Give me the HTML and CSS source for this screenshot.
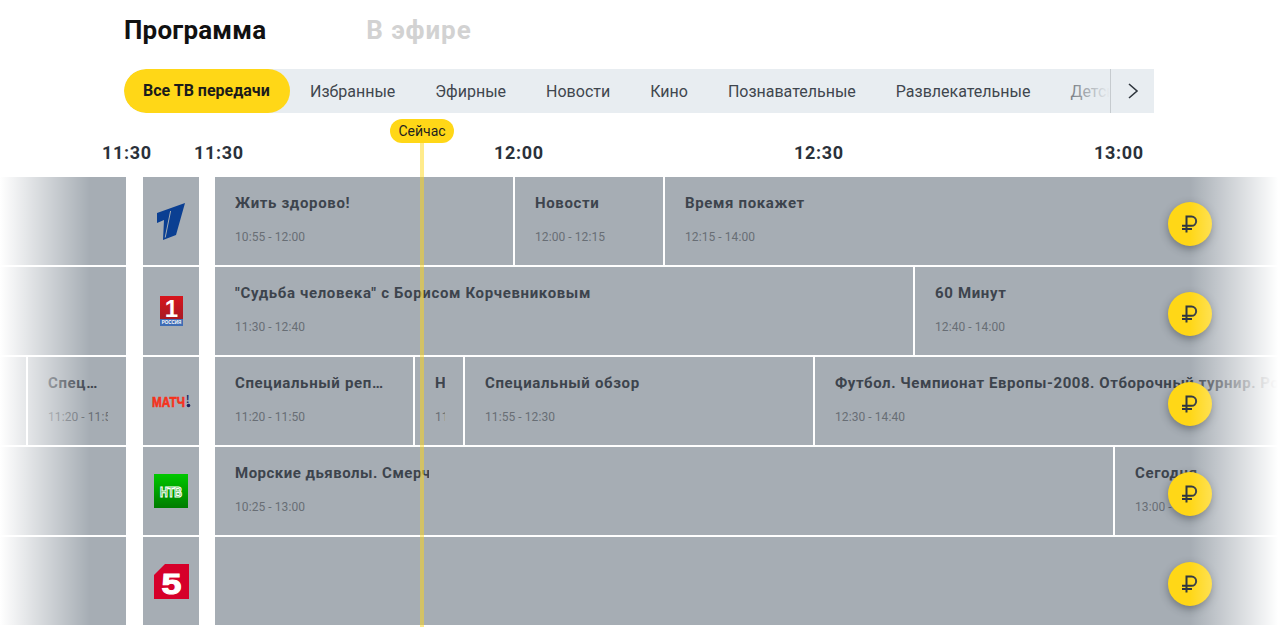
FILE: index.html
```html
<!DOCTYPE html>
<html lang="ru">
<head>
<meta charset="utf-8">
<title>Программа</title>
<link rel="stylesheet" href="styles.css">
</head>
<body>
<div class="page">
  <header class="tabs">
    <h1 class="tab tab-active">Программа</h1>
    <h1 class="tab">В эфире</h1>
  </header>

  <nav class="filters">
    <div class="filter-list">
      <a class="filter filter-active">Все ТВ передачи</a>
      <a class="filter">Избранные</a>
      <a class="filter">Эфирные</a>
      <a class="filter">Новости</a>
      <a class="filter">Кино</a>
      <a class="filter">Познавательные</a>
      <a class="filter">Развлекательные</a>
      <a class="filter">Детские</a>
    </div>
    <div class="filter-fade"></div>
    <button class="filter-next" aria-label="Вперёд">
      <svg width="12" height="18" viewBox="0 0 12 18"><path d="M2 2l8 7-8 7" fill="none" stroke="#2f363e" stroke-width="1.6"/></svg>
    </button>
  </nav>

  <div class="times">
    <span class="time time-prev">11:30</span>
    <span class="time">11:30</span>
    <span class="time">12:00</span>
    <span class="time">12:30</span>
    <span class="time">13:00</span>
  </div>

  <main class="guide">
    <section class="row">
      <div class="prev"></div>
      <div class="logo">
        <svg width="28" height="38" viewBox="0 0 28 38"><polygon points="0,11 28,1 19,33 6,38 7,18 0,21" fill="#0b3f92"/><path d="M13.600 9L8.200 35.500" stroke="#a6adb4" stroke-width="1"/></svg>
      </div>
      <div class="track">
        <article class="show w300"><h2 class="show-title">Жить здорово!</h2><p class="show-time">10:55 - 12:00</p></article>
        <article class="show w150"><h2 class="show-title">Новости</h2><p class="show-time">12:00 - 12:15</p></article>
        <article class="show w1400"><h2 class="show-title">Время покажет</h2><p class="show-time">12:15 - 14:00</p></article>
      </div>
      <button class="pay" aria-label="Купить"><svg width="16" height="18" viewBox="0 0 16 18"><path d="M4.500 17.500V1.500h5a4.500 4.500 0 0 1 0 9.300H0M0 14h10" fill="none" stroke="#30373f" stroke-width="2"/></svg></button>
    </section>

    <section class="row">
      <div class="prev"></div>
      <div class="logo">
        <svg width="23" height="30" viewBox="0 0 23 30"><defs><linearGradient id="rr" x1="0" y1="0" x2="0" y2="1"><stop offset="0" stop-color="#d8141c"/><stop offset="1" stop-color="#a81a24"/></linearGradient></defs><rect width="23" height="23" fill="url(#rr)"/><rect y="23" width="23" height="7" fill="#3f6db5"/><text x="11.500" y="20.500" class="logo-one">1</text><text x="11.500" y="28.300" class="logo-rus">РОССИЯ</text></svg>
      </div>
      <div class="track">
        <article class="show w700"><h2 class="show-title">"Судьба человека" с Борисом Корчевниковым</h2><p class="show-time">11:30 - 12:40</p></article>
        <article class="show w1400"><h2 class="show-title">60 Минут</h2><p class="show-time">12:40 - 14:00</p></article>
      </div>
      <button class="pay" aria-label="Купить"><svg width="16" height="18" viewBox="0 0 16 18"><path d="M4.500 17.500V1.500h5a4.500 4.500 0 0 1 0 9.300H0M0 14h10" fill="none" stroke="#30373f" stroke-width="2"/></svg></button>
    </section>

    <section class="row">
      <div class="prev">
        <article class="show w28 prev-gap"></article>
        <article class="show w100"><h2 class="show-title tight">Специальный репортаж</h2><p class="show-time">11:20 - 11:50</p></article>
      </div>
      <div class="logo">
        <svg width="39" height="13" viewBox="0 0 39 13"><text x="0" y="12" class="logo-match" textLength="33" lengthAdjust="spacingAndGlyphs">МАТЧ</text><text x="34" y="8" class="logo-bang">!</text><circle cx="36.500" cy="10.500" r="1.800" fill="#20245c"/></svg>
      </div>
      <div class="track">
        <article class="show w200"><h2 class="show-title tight">Специальный репортаж</h2><p class="show-time">11:20 - 11:50</p></article>
        <article class="show w50"><h2 class="show-title clip">Новости</h2><p class="show-time">11:50 - 11:55</p></article>
        <article class="show w350"><h2 class="show-title">Специальный обзор</h2><p class="show-time">11:55 - 12:30</p></article>
        <article class="show w1400"><h2 class="show-title long">Футбол. Чемпионат Европы-2008. Отборочный турнир. Россия - Англия</h2><p class="show-time">12:30 - 14:40</p></article>
      </div>
      <button class="pay" aria-label="Купить"><svg width="16" height="18" viewBox="0 0 16 18"><path d="M4.500 17.500V1.500h5a4.500 4.500 0 0 1 0 9.300H0M0 14h10" fill="none" stroke="#30373f" stroke-width="2"/></svg></button>
    </section>

    <section class="row">
      <div class="prev"></div>
      <div class="logo">
        <svg width="34" height="34" viewBox="0 0 34 34"><defs><linearGradient id="ntv" x1="0" y1="0" x2="0" y2="1"><stop offset="0" stop-color="#00c800"/><stop offset="1" stop-color="#007c00"/></linearGradient></defs><rect width="34" height="34" fill="url(#ntv)"/><text x="6" y="23" class="logo-ntv" textLength="22" lengthAdjust="spacingAndGlyphs">НТВ</text></svg>
      </div>
      <div class="track">
        <article class="show w900"><h2 class="show-title cut">Морские дьяволы. Смерч</h2><p class="show-time">10:25 - 13:00</p></article>
        <article class="show w1400"><h2 class="show-title">Сегодня</h2><p class="show-time">13:00 - 14:00</p></article>
      </div>
      <button class="pay" aria-label="Купить"><svg width="16" height="18" viewBox="0 0 16 18"><path d="M4.500 17.500V1.500h5a4.500 4.500 0 0 1 0 9.300H0M0 14h10" fill="none" stroke="#30373f" stroke-width="2"/></svg></button>
    </section>

    <section class="row">
      <div class="prev"></div>
      <div class="logo">
        <svg width="35" height="35" viewBox="0 0 35 35"><polygon points="11,0 35,0 35,35 0,35 0,11" fill="#d6002a"/><text x="7.500" y="29.500" class="logo-five" textLength="20" lengthAdjust="spacingAndGlyphs">5</text></svg>
      </div>
      <div class="track">
        <article class="show w1400"></article>
      </div>
      <button class="pay" aria-label="Купить"><svg width="16" height="18" viewBox="0 0 16 18"><path d="M4.500 17.500V1.500h5a4.500 4.500 0 0 1 0 9.300H0M0 14h10" fill="none" stroke="#30373f" stroke-width="2"/></svg></button>
    </section>

    <div class="fade fade-left"></div>
    <div class="fade fade-right"></div>
  </main>

  <div class="now">
    <span class="now-label">Сейчас</span>
    <span class="now-line"></span>
  </div>
</div>
</body>
</html>
```

FILE: styles.css
```css
* { box-sizing: border-box; }
html, body { margin: 0; padding: 0; background: #fff; }
body { font-family: Roboto, "Liberation Sans", sans-serif; color: #2f363e; }

.page { position: relative; width: 1278px; height: 627px; overflow: hidden; }

.tabs { display: flex; gap: 100px; height: 69px; padding: 14px 0 0 124px; }
.tab { margin: 0; font: 700 26px/33px Roboto, sans-serif; letter-spacing: .9px; color: #d2d2d2; }
.tab-active { letter-spacing: .2px; color: #111; }

.filters { position: relative; display: flex; width: 1030px; height: 44px; margin-left: 124px; border-radius: 22px 0 0 22px; background: #e8edf1; overflow: hidden; }
.filter-list { display: flex; flex: none; width: 986px; overflow: hidden; }
.filter { flex: none; padding: 0 20px; font-size: 16px; line-height: 45px; color: #3f464e; white-space: nowrap; }
.filter-active { padding: 0 19px; width: 166px; border-radius: 22px; background: #ffd717; font-weight: 700; line-height: 44px; color: #1b1b1b; }
.filter-fade { position: absolute; top: 0; right: 44px; width: 60px; height: 44px; background: linear-gradient(to right, rgba(232,237,241,0), #e8edf1); }
.filter-next { position: relative; display: flex; flex: 1; align-items: center; justify-content: center; padding: 0; border: 0; border-left: 1px solid #c6cbcf; background: #e8edf1; }

.times { display: flex; height: 64px; padding: 28px 0 0 102px; }
.time { flex: none; width: 300px; font-size: 18px; font-weight: 700; line-height: 24px; letter-spacing: .7px; color: #2a313a; }
.time-prev { width: 92px; }

.guide { position: relative; display: flex; flex-direction: column; gap: 2px; }
.row { position: relative; display: flex; flex: none; height: 88px; }
.prev { display: flex; flex: none; width: 126px; margin-right: 17px; background: #a6adb4; overflow: hidden; }
.logo { display: flex; flex: none; align-items: center; justify-content: center; width: 56px; margin-right: 16px; background: #a6adb4; }
.track { display: flex; flex: 1; min-width: 0; overflow: hidden; }

.show { flex: none; height: 88px; padding: 0 18px 0 20px; border-right: 2px solid #fff; background: #a6adb4; overflow: hidden; }
.prev-gap { padding: 0; }
.show-title { margin: 16px 0 0; font: 700 15px/20px Roboto, sans-serif; letter-spacing: .65px; color: #3d444d; white-space: nowrap; overflow: hidden; text-overflow: ellipsis; }
.show-title.tight { padding-right: 8px; }
.show-title.clip { text-overflow: clip; }
.show-title.cut { max-width: 194px; letter-spacing: .5px; text-overflow: clip; }
.show-title.long { letter-spacing: .55px; }
.show-time { margin: 15px 0 0; font-size: 12px; line-height: 18px; letter-spacing: .08px; color: #686e75; white-space: nowrap; overflow: hidden; }

.w28 { width: 28px; } .w50 { width: 50px; } .w100 { width: 100px; }
.w150 { width: 150px; } .w200 { width: 200px; } .w300 { width: 300px; }
.w350 { width: 350px; } .w700 { width: 700px; } .w900 { width: 900px; }
.w1400 { width: 1400px; }

.logo text { font-family: "Liberation Sans", sans-serif; font-weight: 700; }
.logo-one { font-size: 24px; fill: #fff; text-anchor: middle; }
.logo-rus { font-size: 4.500px; fill: #fff; text-anchor: middle; }
.logo-match { font-size: 14px; fill: #f5321c; stroke: #f5321c; stroke-width: .6px; }
.logo-bang { font-size: 10px; fill: #20245c; }
.logo-ntv { font-size: 14px; fill: #0a9a0a; stroke: #fff; stroke-width: 1.200px; }
.logo-five { font-size: 30px; fill: #fff; stroke: #fff; stroke-width: 1px; }

.pay { position: absolute; top: 25px; left: 1168px; display: flex; align-items: center; justify-content: center; width: 44px; height: 44px; padding: 0; border: 0; border-radius: 50%; background: #ffd717; box-shadow: 0 3px 8px rgba(40,46,54,.45); }

.fade { position: absolute; top: 0; bottom: 0; pointer-events: none; }
.fade-left { left: 0; width: 90px; background: linear-gradient(to right, #fff, rgba(255,255,255,0)); }
.fade-right { right: 0; width: 88px; background: linear-gradient(to left, #fff, rgba(255,255,255,0)); }

.now { position: absolute; top: 119px; left: 390px; display: flex; flex-direction: column; align-items: center; width: 64px; height: 508px; }
.now-label { flex: none; width: 64px; height: 24px; border-radius: 12px; background: #ffd717; font-size: 14px; line-height: 24px; text-align: center; color: #1f1f1f; }
.now-line { flex: 1; width: 4px; background: rgba(255,215,23,.5); }
```
